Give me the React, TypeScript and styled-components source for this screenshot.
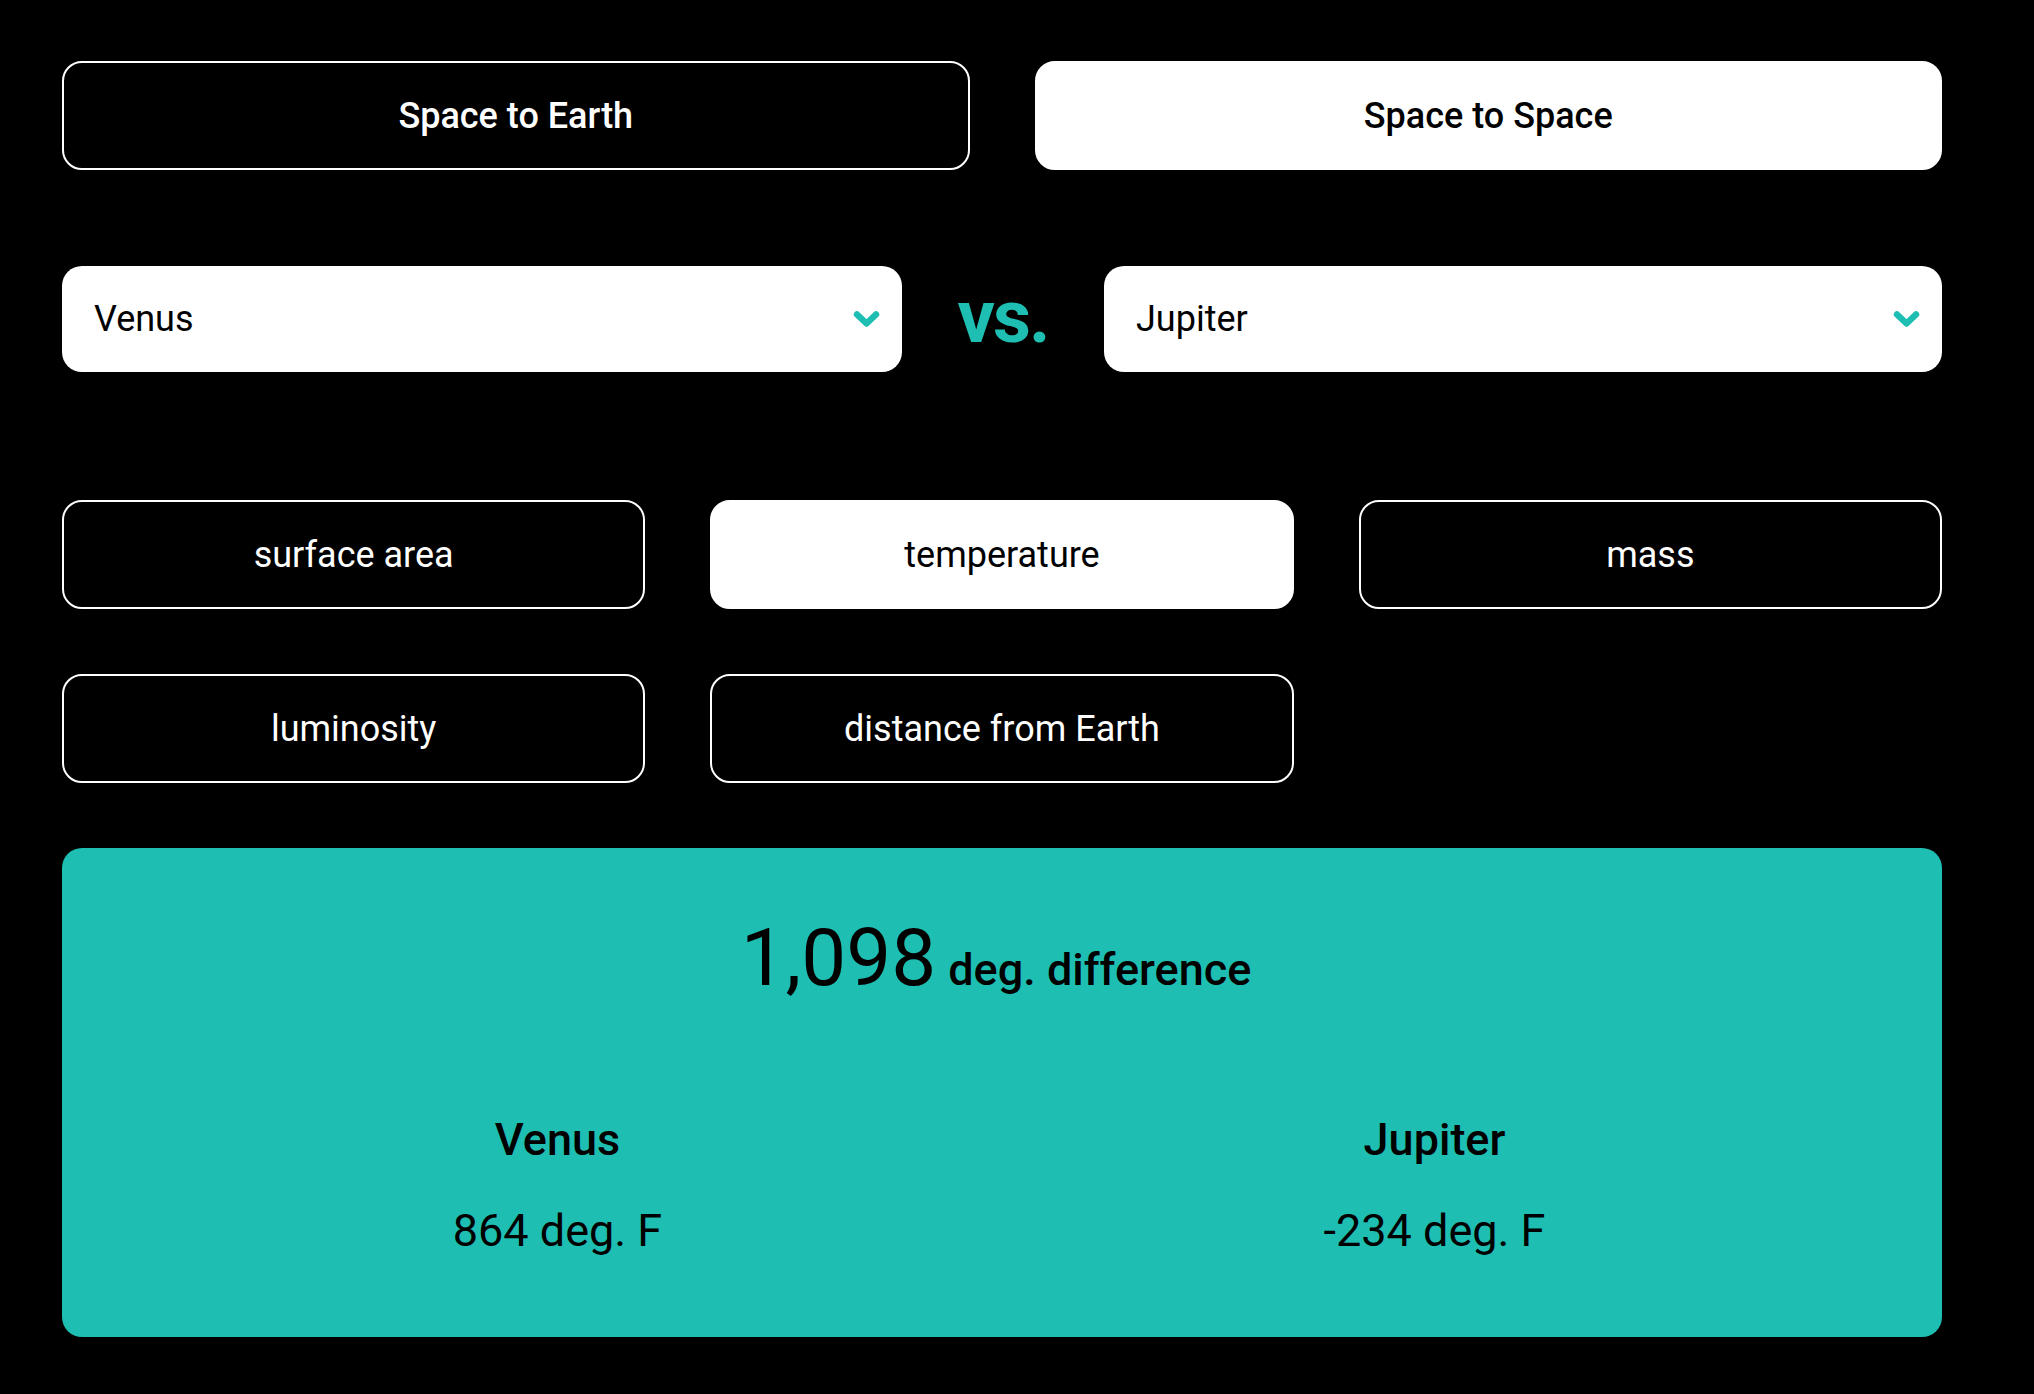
import React, { useState } from "react";
import styled, { createGlobalStyle } from "styled-components";

const GlobalStyle = createGlobalStyle`
  html, body {
    margin: 0;
    padding: 0;
    background: #000;
  }
  body {
    font-family: Roboto, "Open Sans", "Liberation Sans", sans-serif;
    color: #fff;
  }
  * { box-sizing: border-box; }
`;

const TEAL = "#1ebeb2";

const Page = styled.div`
  width: 2034px;
  min-height: 1394px;
  padding: 61px 92px 0 62px;
  background: #000;
`;

const ModeRow = styled.div`
  display: grid;
  grid-template-columns: 1fr 1fr;
  column-gap: 65px;
`;

const PillButton = styled.button<{ $active?: boolean; $height: number; $weight: number }>`
  height: ${(p) => p.$height}px;
  display: flex;
  align-items: center;
  justify-content: center;
  border: 2px solid #fff;
  border-radius: 20px;
  background: ${(p) => (p.$active ? "#fff" : "#000")};
  color: ${(p) => (p.$active ? "#000" : "#fff")};
  font-family: Roboto, "Open Sans", "Liberation Sans", sans-serif;
  font-size: 36px;
  font-weight: ${(p) => p.$weight};
  letter-spacing: 0;
  cursor: pointer;
  padding: 0;
`;

const CompareRow = styled.div`
  margin-top: 96px;
  display: grid;
  grid-template-columns: 840px 1fr 838px;
  align-items: center;
  height: 106px;
`;

const SelectBox = styled.div`
  height: 106px;
  background: #fff;
  border-radius: 20px;
  display: flex;
  align-items: center;
  justify-content: space-between;
  padding: 0 22px 0 32px;
  color: #000;
  font-size: 36px;
  font-weight: 400;
  cursor: pointer;
`;

const Versus = styled.div`
  text-align: center;
  color: ${TEAL};
  font-size: 74px;
  font-weight: 700;
  letter-spacing: -2px;
  line-height: 1;
  padding-bottom: 4px;
`;

const MetricGrid = styled.div`
  margin-top: 128px;
  display: grid;
  grid-template-columns: repeat(3, 1fr);
  gap: 65px;
`;

const ResultPanel = styled.section`
  margin-top: 65px;
  height: 489px;
  background: ${TEAL};
  border-radius: 20px;
  color: #000;
  padding: 70px 69px 0 57px;
  display: flex;
  flex-direction: column;
`;

const Headline = styled.div`
  display: flex;
  justify-content: center;
  align-items: baseline;
  gap: 12px;
  line-height: 1;
  height: 80px;
`;

const BigNumber = styled.span`
  font-size: 80px;
  font-weight: 400;
`;

const BigUnit = styled.span`
  font-size: 45px;
  font-weight: 500;
`;

const PlanetColumns = styled.div`
  margin-top: 119px;
  display: grid;
  grid-template-columns: 1fr 1fr;
`;

const PlanetColumn = styled.div`
  display: flex;
  flex-direction: column;
  align-items: center;
  gap: 46px;
  line-height: 1;
`;

const PlanetName = styled.div`
  font-size: 45px;
  font-weight: 500;
  height: 45px;
`;

const PlanetValue = styled.div`
  font-size: 45px;
  font-weight: 400;
  height: 45px;
`;

const Chevron = () => (
  <svg width="27" height="18" viewBox="0 0 27 18" aria-hidden="true">
    <path
      d="M4 4.5 L13.5 13.5 L23 4.5"
      fill="none"
      stroke={TEAL}
      strokeWidth="6.5"
      strokeLinecap="round"
      strokeLinejoin="round"
    />
  </svg>
);

const metrics = ["surface area", "temperature", "mass", "luminosity", "distance from Earth"];

export default function App() {
  const [mode, setMode] = useState("space");
  const [metric, setMetric] = useState("temperature");

  return (
    <>
      <GlobalStyle />
      <Page>
        <ModeRow>
          <PillButton
            $height={109}
            $weight={500}
            $active={mode === "earth"}
            onClick={() => setMode("earth")}
          >
            Space to Earth
          </PillButton>
          <PillButton
            $height={109}
            $weight={500}
            $active={mode === "space"}
            onClick={() => setMode("space")}
          >
            Space to Space
          </PillButton>
        </ModeRow>

        <CompareRow>
          <SelectBox>
            <span>Venus</span>
            <Chevron />
          </SelectBox>
          <Versus>vs.</Versus>
          <SelectBox>
            <span>Jupiter</span>
            <Chevron />
          </SelectBox>
        </CompareRow>

        <MetricGrid>
          {metrics.map((m) => (
            <PillButton
              key={m}
              $height={109}
              $weight={400}
              $active={metric === m}
              onClick={() => setMetric(m)}
            >
              {m}
            </PillButton>
          ))}
        </MetricGrid>

        <ResultPanel>
          <Headline>
            <BigNumber>1,098</BigNumber>
            <BigUnit>deg. difference</BigUnit>
          </Headline>
          <PlanetColumns>
            <PlanetColumn>
              <PlanetName>Venus</PlanetName>
              <PlanetValue>864 deg. F</PlanetValue>
            </PlanetColumn>
            <PlanetColumn>
              <PlanetName>Jupiter</PlanetName>
              <PlanetValue>-234 deg. F</PlanetValue>
            </PlanetColumn>
          </PlanetColumns>
        </ResultPanel>
      </Page>
    </>
  );
}
